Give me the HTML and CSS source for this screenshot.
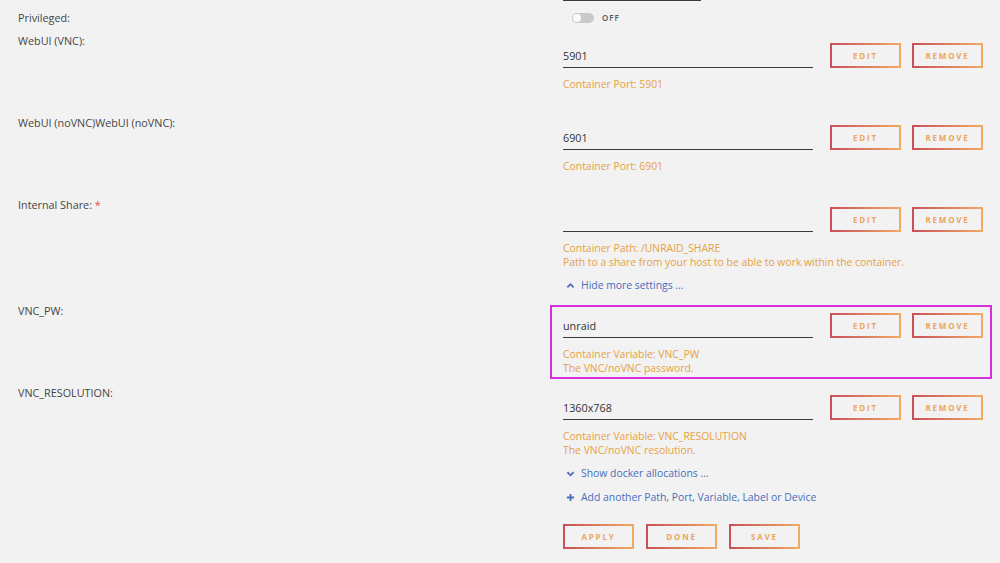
FILE: index.html
```html
<!DOCTYPE html>
<html>
<head>
<meta charset="utf-8">
<link rel="stylesheet" href="styles.css">
</head>
<body>
<div class="page">
  <div class="prev-line"></div>

  <div class="setting setting-toggle">
    <div class="label">Privileged:</div>
    <div class="content">
      <div class="toggle-row">
        <span class="switch"><span class="knob"></span></span>
        <span class="switch-text">OFF</span>
      </div>
    </div>
  </div>

  <div class="setting">
    <div class="label">WebUI (VNC):</div>
    <div class="content">
      <div class="field-row">
        <div class="input">5901</div>
        <button class="btn">EDIT</button>
        <button class="btn">REMOVE</button>
      </div>
      <div class="desc">Container Port: 5901<br>&nbsp;</div>
    </div>
  </div>

  <div class="setting">
    <div class="label">WebUI (noVNC)WebUI (noVNC):</div>
    <div class="content">
      <div class="field-row">
        <div class="input">6901</div>
        <button class="btn">EDIT</button>
        <button class="btn">REMOVE</button>
      </div>
      <div class="desc">Container Port: 6901<br>&nbsp;</div>
    </div>
  </div>

  <div class="setting">
    <div class="label">Internal Share: <span class="req">*</span></div>
    <div class="content">
      <div class="field-row">
        <div class="input"></div>
        <button class="btn">EDIT</button>
        <button class="btn">REMOVE</button>
      </div>
      <div class="desc">Container Path: /UNRAID_SHARE<br>Path to a share from your host to be able to work within the container.</div>
      <div class="link">
        <svg class="ico" viewBox="0 0 10 10" width="9" height="9"><path d="M1.5 7 L5 3.5 L8.5 7" fill="none" stroke="#486dba" stroke-width="2"/></svg>
        <span>Hide more settings ...</span>
      </div>
    </div>
  </div>

  <div class="setting">
    <div class="label">VNC_PW:</div>
    <div class="content">
      <div class="highlight">
        <div class="field-row">
          <div class="input">unraid</div>
          <button class="btn">EDIT</button>
          <button class="btn">REMOVE</button>
        </div>
        <div class="desc">Container Variable: VNC_PW<br>The VNC/noVNC password.</div>
      </div>
    </div>
  </div>

  <div class="setting">
    <div class="label">VNC_RESOLUTION:</div>
    <div class="content">
      <div class="field-row">
        <div class="input">1360x768</div>
        <button class="btn">EDIT</button>
        <button class="btn">REMOVE</button>
      </div>
      <div class="desc">Container Variable: VNC_RESOLUTION<br>The VNC/noVNC resolution.</div>
      <div class="link">
        <svg class="ico" viewBox="0 0 10 10" width="9" height="9"><path d="M1.5 3.5 L5 7 L8.5 3.5" fill="none" stroke="#486dba" stroke-width="2"/></svg>
        <span>Show docker allocations ...</span>
      </div>
      <div class="link">
        <svg class="ico" viewBox="0 0 10 10" width="9" height="9"><path d="M5 1 V9 M1 5 H9" fill="none" stroke="#486dba" stroke-width="2"/></svg>
        <span>Add another Path, Port, Variable, Label or Device</span>
      </div>
      <div class="actions">
        <button class="btn">APPLY</button>
        <button class="btn">DONE</button>
        <button class="btn">SAVE</button>
      </div>
    </div>
  </div>
</div>
</body>
</html>
```

FILE: styles.css
```css
html, body {
  margin: 0;
  padding: 0;
  background: #f2f2f2;
}
body {
  font-family: "Open Sans", "Noto Sans", sans-serif;
  font-size: 10.4px;
  color: #4a4a4a;
  width: 1000px;
  height: 563px;
  overflow: hidden;
}
.page {
  padding-left: 18px;
}
.prev-line {
  margin-left: 545px;
  width: 138px;
  height: 1px;
  background: #3a3a3a;
}
.setting {
  display: flex;
  padding-bottom: 10px;
}
.setting-toggle {
  margin-top: 9px;
  padding-bottom: 8px;
}
.label {
  width: 545px;
  flex: none;
  line-height: 15px;
  font-size: 10.8px;
  color: #454545;
}
.req { color: #e05050; }
.content {
  width: 420px;
  flex: none;
  padding-top: 10px;
}
.setting-toggle .content { padding-top: 0; }
.toggle-row {
  display: flex;
  align-items: center;
  height: 15px;
  padding-left: 9px;
  gap: 8px;
}
.switch {
  width: 22px;
  height: 10px;
  border-radius: 5px;
  background: #c9c9c9;
  position: relative;
  display: block;
}
.knob {
  position: absolute;
  left: 1px;
  top: 1px;
  width: 8px;
  height: 8px;
  border-radius: 50%;
  background: #fafafa;
}
.switch-text {
  font-size: 8px;
  font-weight: 600;
  letter-spacing: 1px;
  color: #555;
}
.field-row {
  display: flex;
  height: 25px;
  gap: 11px;
}
.input {
  width: 250px;
  flex: none;
  box-sizing: border-box;
  border-bottom: 1px solid #3a3a3a;
  font-size: 10.8px;
  color: #333;
  padding-top: 3px;
  line-height: 20px;
  margin-right: 6px;
}
.btn {
  width: 71px;
  height: 25px;
  flex: none;
  box-sizing: border-box;
  background: transparent;
  border: 2px solid;
  border-image: linear-gradient(90deg, #c9505a, #f0aa62) 1;
  font-family: "Open Sans", "Noto Sans", sans-serif;
  font-size: 8px;
  font-weight: 700;
  letter-spacing: 1.8px;
  color: #eba660;
  padding: 0;
  margin: 0;
}
.desc {
  margin-top: 9px;
  line-height: 14px;
  color: #e6a142;
}
.link {
  margin-top: 9px;
  line-height: 15px;
  color: #486dba;
  display: flex;
  align-items: center;
  gap: 6px;
  padding-left: 3px;
}
.ico { display: block; }
.actions {
  display: flex;
  margin-top: 19px;
  gap: 12px;
}
.highlight {
  border: 2px solid #d42fd8;
  margin: -8px -9px -4px -13px;
  padding: 6px 7px 2px 11px;
}
```
